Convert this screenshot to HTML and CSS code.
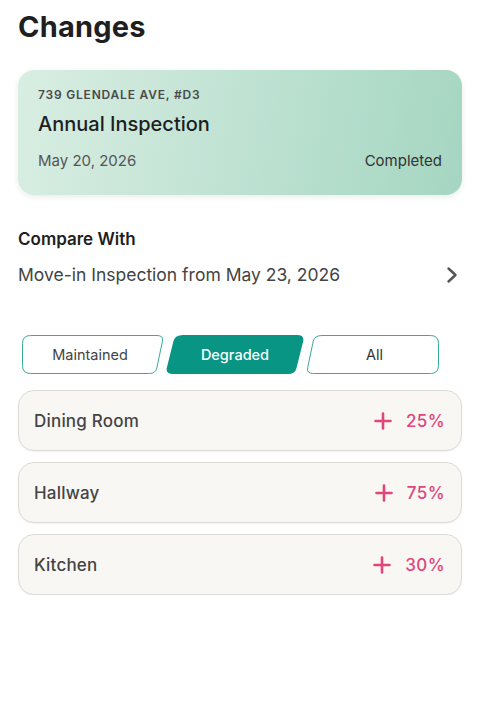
FILE: index.html
```html
<!DOCTYPE html>
<html lang="en">
<head>
    <meta charset="UTF-8">
    <meta name="viewport" content="width=device-width, initial-scale=1.0">
    <title>Changes</title>
    <link rel="stylesheet" href="styles.css">
</head>
<body>
    <h1 class="page-title">Changes</h1>

    <div class="inspection-card">
        <div class="address">739 Glendale Ave, #D3</div>
        <div class="inspection-name">Annual Inspection</div>
        <div class="inspection-meta">
            <span>May 20, 2026</span>
            <span class="status">Completed</span>
        </div>
    </div>

    <div class="compare">
        <div class="compare-label">Compare With</div>
        <div class="compare-row">
            <span>Move-in Inspection from May 23, 2026</span>
            <svg class="chevron" width="14" height="18" viewBox="0 0 14 18">
                <path d="M3.5 2.5 L10.5 9 L3.5 15.5" fill="none" stroke="#555" stroke-width="2.4" stroke-linecap="round" stroke-linejoin="round"/>
            </svg>
        </div>
    </div>

    <div class="tabs">
        <button class="tab tab-first">
            <svg class="tab-shape" width="142" height="39" viewBox="0 0 142 39">
                <path d="M8.5 0.5 H135 Q141.8 0.5 140.4 6.5 L134.8 33 Q133.6 38.5 127.5 38.5 H8.5 Q0.5 38.5 0.5 30.5 V8.5 Q0.5 0.5 8.5 0.5 Z" fill="#fff" stroke="#3aab99" stroke-width="1"/>
            </svg>
            <span>Maintained</span>
        </button>
        <button class="tab tab-active">
            <svg class="tab-shape" width="138" height="39" viewBox="0 0 138 39">
                <path d="M17 0 H131 Q139 0 137 7 L130.5 33 Q129 39 122 39 H7 Q-1 39 1 32 L7.5 6 Q9 0 17 0 Z" fill="#089583"/>
            </svg>
            <span>Degraded</span>
        </button>
        <button class="tab tab-last">
            <svg class="tab-shape" width="133" height="39" viewBox="0 0 133 39">
                <path d="M16 0.5 H124.5 Q132.5 0.5 132.5 8.5 V30.5 Q132.5 38.5 124.5 38.5 H7.5 Q0.3 38.5 1.7 32.5 L7.3 6 Q8.6 0.5 16 0.5 Z" fill="#fff" stroke="#3aab99" stroke-width="1"/>
            </svg>
            <span>All</span>
        </button>
    </div>

    <div class="rooms">
        <div class="room-row">
            <span class="room-name">Dining Room</span>
            <span class="room-change">
                <svg width="18" height="18" viewBox="0 0 18 18"><path d="M9 1.5 V16.5 M1.5 9 H16.5" stroke="#e0457c" stroke-width="2.6" stroke-linecap="round"/></svg>
                25%
            </span>
        </div>
        <div class="room-row">
            <span class="room-name">Hallway</span>
            <span class="room-change">
                <svg width="18" height="18" viewBox="0 0 18 18"><path d="M9 1.5 V16.5 M1.5 9 H16.5" stroke="#e0457c" stroke-width="2.6" stroke-linecap="round"/></svg>
                75%
            </span>
        </div>
        <div class="room-row">
            <span class="room-name">Kitchen</span>
            <span class="room-change">
                <svg width="18" height="18" viewBox="0 0 18 18"><path d="M9 1.5 V16.5 M1.5 9 H16.5" stroke="#e0457c" stroke-width="2.6" stroke-linecap="round"/></svg>
                30%
            </span>
        </div>
    </div>
</body>
</html>
```

FILE: styles.css
```css
body {
    font-family: 'Inter', 'Noto Sans', sans-serif;
    background-color: #ffffff;
    color: #222;
    margin: 0;
    padding: 9px 18px 0 18px;
}
.page-title {
    font-size: 29px;
    line-height: 35px;
    font-weight: 700;
    letter-spacing: 0.2px;
    margin: 0;
    color: #1f1f1f;
}
.inspection-card {
    margin-top: 26px;
    padding: 17px 20px 24px 20px;
    border-radius: 16px;
    background: linear-gradient(100deg, #d9eee3 0%, #bfe2d3 50%, #a5d6c2 100%);
    box-shadow: 0 2px 6px rgba(0, 0, 0, 0.08);
}
.address {
    font-size: 12px;
    line-height: 16px;
    font-weight: 600;
    letter-spacing: 0.8px;
    text-transform: uppercase;
    color: #4a4a4a;
}
.inspection-name {
    margin-top: 9px;
    font-size: 20px;
    line-height: 24px;
    font-weight: 500;
    color: #1e1e1e;
}
.inspection-meta {
    display: flex;
    justify-content: space-between;
    margin-top: 15px;
    font-size: 15px;
    line-height: 20px;
    color: #555;
}
.status {
    color: #333;
}
.compare {
    margin-top: 34px;
}
.compare-label {
    font-size: 17px;
    line-height: 21px;
    font-weight: 600;
    color: #1e1e1e;
}
.compare-row {
    display: flex;
    align-items: center;
    justify-content: space-between;
    margin-top: 13px;
    font-size: 17.5px;
    line-height: 24px;
    color: #444;
}
.chevron {
    margin-right: 3px;
}
.tabs {
    display: flex;
    margin: 48px 0 0 4px;
    gap: 2px;
}
.tab {
    position: relative;
    height: 39px;
    padding: 0;
    border: none;
    background: none;
    font-family: inherit;
    font-size: 14.5px;
    color: #444;
    cursor: pointer;
}
.tab-shape {
    position: absolute;
    left: 0;
    top: 0;
}
.tab span {
    position: relative;
}
.tab-first {
    width: 142px;
    padding-right: 6px;
}
.tab-active {
    width: 138px;
    color: #fff;
    font-weight: 500;
}
.tab-last {
    width: 133px;
    padding-left: 4px;
    color: #333;
}
.rooms {
    display: flex;
    flex-direction: column;
    gap: 11px;
    margin-top: 16px;
}
.room-row {
    display: flex;
    align-items: center;
    justify-content: space-between;
    height: 59px;
    padding: 0 16px 0 15px;
    background-color: #f8f7f4;
    border: 1px solid #dcdbd8;
    border-radius: 16px;
    box-shadow: 0 1px 2px rgba(0, 0, 0, 0.06);
}
.room-name {
    font-size: 17px;
    font-weight: 500;
    letter-spacing: 0.2px;
    color: #444;
}
.room-change {
    display: flex;
    align-items: center;
    gap: 14px;
    font-size: 17px;
    font-weight: 500;
    letter-spacing: 0.4px;
    color: #e0457c;
}
```
